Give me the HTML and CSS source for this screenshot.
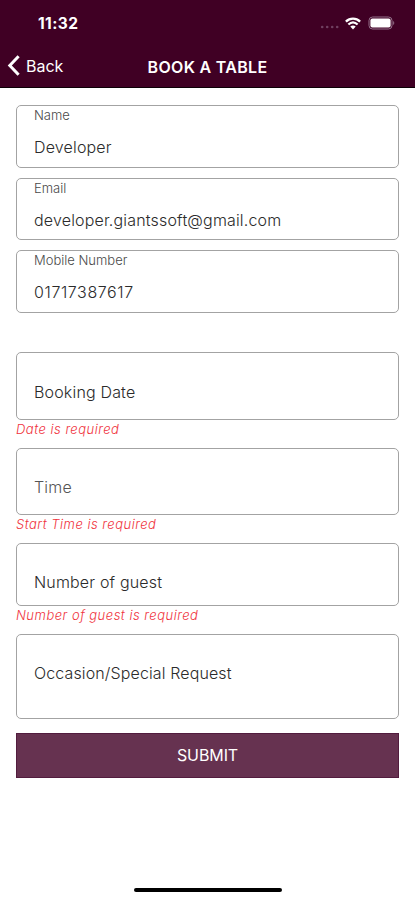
FILE: index.html
```html
<!DOCTYPE html>
<html lang="en">
    <head>
        <meta charset="UTF-8">
        <meta name="viewport" content="width=device-width, initial-scale=1.0">
        <title>Book a Table</title>
        <link rel="stylesheet" href="styles.css">
    </head>
    <body>
        <header class="header">
            <div class="status-bar">
                <span class="clock">11:32</span>
                <div class="status-icons">
                    <svg class="signal" width="20" height="4" viewBox="0 0 20 4">
                        <circle cx="2.2" cy="2" r="1.3" />
                        <circle cx="7.2" cy="2" r="1.3" />
                        <circle cx="12.2" cy="2" r="1.3" />
                        <circle cx="17.2" cy="2" r="1.3" />
                    </svg>
                    <svg class="wifi" width="16" height="13" viewBox="0 0 16 13">
                        <path d="M.9 4.6C5 .6 11 .6 15.1 4.6M3.4 7.5C6.2 4.9 9.8 4.9 12.6 7.5" />
                        <path class="wifi-dot" d="M5.3 9.6C6.9 8.2 9.1 8.2 10.7 9.6L8 12.6z" />
                    </svg>
                    <svg class="battery" width="27" height="14" viewBox="0 0 27 14">
                        <rect class="battery-shell" x="1" y="1" width="23" height="12" rx="3.5" />
                        <rect x="2.4" y="2.4" width="20.2" height="9.2" rx="2" fill="#fff" />
                        <path class="battery-tip" d="M25.2 5c1.4.6 1.4 3.4 0 4z" />
                    </svg>
                </div>
            </div>
            <nav class="nav-bar">
                <a class="back" href="#">
                    <svg width="14" height="22" viewBox="0 0 14 22">
                        <path d="M12.6 1.2L3.8 10.5l8.8 9.2" />
                    </svg>
                    <span>Back</span>
                </a>
                <h1 class="title">BOOK A TABLE</h1>
            </nav>
        </header>

        <main class="form">
            <section class="contact">
                <div class="field">
                    <span class="label">Name</span>
                    <span class="value">Developer</span>
                </div>
                <div class="field">
                    <span class="label">Email</span>
                    <span class="value">developer.giantssoft@gmail.com</span>
                </div>
                <div class="field">
                    <span class="label">Mobile Number</span>
                    <span class="value value-mobile">01717387617</span>
                </div>
            </section>

            <section class="booking">
                <div class="field field-tall">
                    <span class="value">Booking Date</span>
                </div>
                <p class="error">Date is required</p>
                <div class="field field-tall">
                    <span class="value value-time">Time</span>
                </div>
                <p class="error">Start Time is required</p>
                <div class="field field-guest">
                    <span class="value">Number of guest</span>
                </div>
                <p class="error">Number of guest is required</p>
                <div class="field field-request">
                    <span class="value">Occasion/Special Request</span>
                </div>
            </section>

            <button class="submit" type="button">SUBMIT</button>
        </main>

        <footer class="home-area">
            <div class="home-indicator"></div>
        </footer>
    </body>
</html>
```
FILE: styles.css
```css
* {
    box-sizing: border-box;
}
body {
    display: flex;
    flex-direction: column;
    height: 900px;
    margin: 0;
    overflow: hidden;
    background: #fff;
    color: #2b2b2b;
    font-family: Inter, "Liberation Sans", sans-serif;
    font-size: 16px;
}

/* header */
.header {
    height: 88px;
    background: #400024;
    border-bottom: 1px solid #0d0007;
    color: #fff;
}
.status-bar {
    display: flex;
    align-items: center;
    justify-content: space-between;
    height: 46px;
    padding: 0 20px 0 38px;
}
.clock {
    font-size: 15.5px;
    font-weight: 700;
    letter-spacing: .4px;
}
.status-icons {
    display: flex;
    align-items: center;
}
.signal {
    margin: 8px 5px 0 0;
    fill: #704060;
}
.wifi {
    margin-right: 7px;
    fill: none;
    stroke: #fff;
    stroke-width: 2.3;
}
.wifi-dot {
    fill: #fff;
    stroke: none;
}
.battery-shell {
    fill: none;
    stroke: #94708a;
}
.battery-tip {
    fill: #94708a;
}
.nav-bar {
    display: grid;
    grid-template-columns: 110px 1fr 110px;
    align-items: center;
    height: 41px;
}
.back {
    display: flex;
    align-items: center;
    gap: 6px;
    padding: 0 0 1px 6px;
    color: #fff;
    font-size: 16px;
    text-decoration: none;
}
.back path {
    fill: none;
    stroke: #fff;
    stroke-width: 3;
}
.title {
    margin: 0;
    font-size: 16px;
    font-weight: 600;
    letter-spacing: .3px;
    text-align: center;
    white-space: nowrap;
}

/* form */
.form {
    display: flex;
    flex-direction: column;
    padding: 17px 16px 0;
}
.contact {
    display: flex;
    flex-direction: column;
    gap: 10px;
}
.booking {
    margin-top: 39px;
}
.field {
    display: flex;
    flex-direction: column;
    align-items: flex-start;
    height: 62.7px;
    padding-left: 17px;
    border: 1px solid #a3a3a3;
    border-radius: 5px;
}
.label {
    height: 20px;
    color: #4a4a4a;
    font-size: 13px;
    font-weight: 300;
    line-height: 18px;
}
.value {
    height: 24px;
    margin-top: 9px;
    font-size: 16px;
    font-weight: 300;
    letter-spacing: .17px;
    line-height: 24px;
    white-space: nowrap;
}
.value-mobile {
    letter-spacing: .6px;
}
.field-tall {
    height: 67.6px;
}
.field-tall .value {
    margin-top: 27px;
}
.field-tall .value-time {
    margin-top: 26px;
    color: #555;
}
.field-guest {
    height: 62.6px;
}
.field-guest .value,
.field-request .value {
    margin-top: 26px;
}
.field-request {
    height: 85.5px;
}
.field-request .value {
    letter-spacing: .12px;
}
.error {
    height: 27.9px;
    margin: 0;
    color: #f0323c;
    font-size: 13px;
    font-style: italic;
    font-weight: 300;
    letter-spacing: .5px;
    line-height: 18px;
}
.submit {
    height: 44.5px;
    margin-top: 14px;
    padding: 0;
    background: #663250;
    border: 1px solid #521c3e;
    color: #fff;
    font-family: inherit;
    font-size: 16px;
    letter-spacing: -.1px;
}

/* home indicator */
.home-area {
    display: flex;
    justify-content: center;
    margin-top: auto;
    padding-bottom: 8px;
}
.home-indicator {
    width: 148px;
    height: 4px;
    background: #000;
    border-radius: 2px;
}
```
